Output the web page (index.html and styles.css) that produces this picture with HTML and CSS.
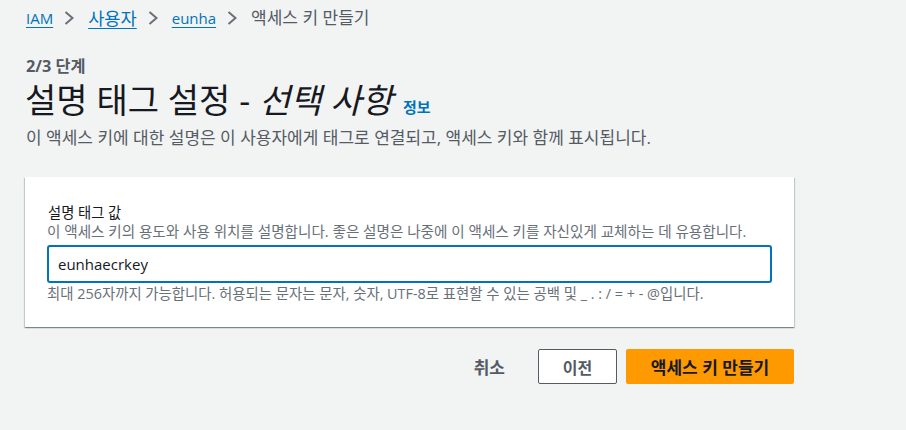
FILE: index.html
```html
<!DOCTYPE html>
<html lang="ko">
<head>
<meta charset="utf-8">
<link rel="stylesheet" href="styles.css">
</head>
<body>
<div class="page">
  <nav class="crumbs">
    <a class="crumb-link crumb-latin">IAM</a>
    <svg class="chev" width="10" height="14" viewBox="0 0 10 14"><path d="M1.5 1 L8.5 7 L1.5 13" fill="none" stroke="#687078" stroke-width="2"/></svg>
    <a class="crumb-link">사용자</a>
    <svg class="chev" width="10" height="14" viewBox="0 0 10 14"><path d="M1.5 1 L8.5 7 L1.5 13" fill="none" stroke="#687078" stroke-width="2"/></svg>
    <a class="crumb-link crumb-latin">eunha</a>
    <svg class="chev" width="10" height="14" viewBox="0 0 10 14"><path d="M1.5 1 L8.5 7 L1.5 13" fill="none" stroke="#687078" stroke-width="2"/></svg>
    <span class="crumb-current">액세스 키 만들기</span>
  </nav>

  <div class="step">2/3 단계</div>
  <h1 class="title">설명 태그 설정 - <em>선택 사항</em><a class="info">정보</a></h1>
  <p class="desc">이 액세스 키에 대한 설명은 이 사용자에게 태그로 연결되고, 액세스 키와 함께 표시됩니다.</p>

  <section class="card">
    <div class="label">설명 태그 값</div>
    <div class="sub">이 액세스 키의 용도와 사용 위치를 설명합니다. 좋은 설명은 나중에 이 액세스 키를 자신있게 교체하는 데 유용합니다.</div>
    <div class="input">eunhaecrkey</div>
    <div class="hint">최대 256자까지 가능합니다. 허용되는 문자는 문자, 숫자, UTF-8로 표현할 수 있는 공백 및 _ . : / = + - @입니다.</div>
  </section>

  <div class="actions">
    <span class="btn-link">취소</span>
    <span class="btn btn-normal">이전</span>
    <span class="btn btn-primary">액세스 키 만들기</span>
  </div>
</div>
</body>
</html>
```

FILE: styles.css
```css
html, body {
  margin: 0;
  padding: 0;
  background: #f2f3f3;
}
body {
  font-family: "Open Sans", "Noto Sans CJK KR", sans-serif;
  color: #16191f;
}
.page {
  width: 769px;
  padding-left: 25px;
}
.crumbs {
  display: flex;
  align-items: center;
  height: 36px;
  padding-left: 1px;
  font-size: 17.6px;
  line-height: 20px;
}
.crumb-link {
  color: #0073bb;
  text-decoration: underline;
  text-decoration-thickness: 1px;
  text-underline-offset: 3px;
}
.crumb-latin {
  font-size: 15px;
}
.chev {
  margin: 0 14px 0 11px;
}
.crumb-current {
  color: #545b64;
  font-size: 17px;
}
.step {
  margin-top: 20px;
  padding-left: 1px;
  font-size: 16.3px;
  font-weight: 700;
  color: #545b64;
  line-height: 20px;
}
.title {
  margin: 4px 0 0 0;
  font-size: 34px;
  font-weight: 400;
  line-height: 40px;
  height: 40px;
  color: #16191f;
  white-space: nowrap;
}
.title em {
  font-style: italic;
}
.info {
  margin-left: 10px;
  font-size: 15px;
  line-height: 1;
  font-weight: 700;
  color: #0073bb;
}
.desc {
  margin: 7px 0 0 1px;
  font-size: 17px;
  color: #545b64;
  line-height: 22px;
  white-space: nowrap;
}
.card {
  margin-top: 28px;
  background: #fff;
  box-shadow: 0 1px 1px 0 rgba(0,28,36,.3), 1px 1px 1px 0 rgba(0,28,36,.15), -1px 1px 1px 0 rgba(0,28,36,.15);
  padding: 27px 22px 24px 22px;
}
.label {
  font-size: 14.3px;
  line-height: 18px;
  color: #16191f;
  padding-left: 1px;
}
.sub {
  font-size: 14.6px;
  line-height: 18px;
  color: #687078;
  margin-bottom: 5px;
  white-space: nowrap;
}
.input {
  box-sizing: border-box;
  height: 38px;
  border: 2px solid #0073bb;
  border-radius: 3px;
  padding: 0 9px;
  display: flex;
  align-items: center;
  font-size: 15px;
  color: #16191f;
}
.hint {
  margin-top: 2px;
  font-size: 14.4px;
  line-height: 18px;
  color: #687078;
  white-space: nowrap;
}
.actions {
  display: flex;
  justify-content: flex-end;
  align-items: center;
  margin-top: 22px;
}
.btn-link {
  font-size: 17px;
  font-weight: 700;
  color: #545b64;
  margin-right: 33px;
}
.btn {
  box-sizing: border-box;
  height: 35px;
  display: flex;
  align-items: center;
  justify-content: center;
  font-size: 17px;
  font-weight: 700;
  border-radius: 2px;
}
.btn-normal {
  width: 79px;
  border: 1px solid #545b64;
  background: #fff;
  color: #545b64;
  margin-right: 9px;
  font-size: 16px;
}
.btn-primary {
  width: 168px;
  background: #ff9900;
  color: #16191f;
}
```
